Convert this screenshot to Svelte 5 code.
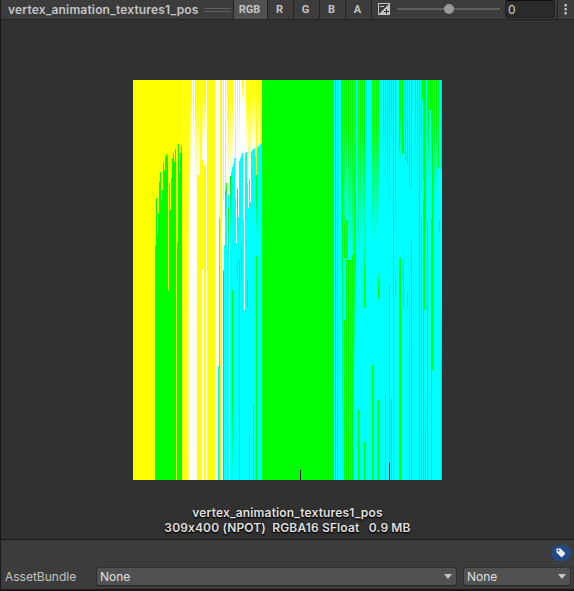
<script>
  const Y = '#ff0', W = '#fff', G = '#0f0', C = '#0ff';
  const gf = 'url(#greenFade)', gr = 'url(#greenRise)', yf = 'url(#yellowFade)', yr = 'url(#yellowRise)';

  // [x, width, top, bottom, fill]
  const base = [
    [0, 50, 0, 400, Y], [50, 79, 0, 400, W], [129, 72, 0, 400, G], [201, 108, 0, 400, C]
  ];

  // first green row of each column, left cluster
  const leftTops = [166, 118, 155, 133, 102, 92, 120, 110, 83, 90, 77, 74, 76, 210, 103, 130, 98, 78, 73, 82, 69, 400, 162, 64, 93, 73, 66];
  const left = leftTops.map((t, i) => [22 + i, 1, t, 400, G]);

  // yellow bars over the white band
  const yellow = [
    [51, 1, 0, 400, Y], [53, 1, 0, 400, Y], [55, 1, 0, 400, yf], [55, 1, 200, 400, yr], [57, 1, 0, 100, yf], [58, 1, 0, 40, yf],
    [60, 1, 0, 90, yf], [62, 2, 0, 110, yf], [64, 1, 0, 55, yf], [64, 2, 95, 400, Y], [65, 1, 0, 90, yf],
    [67, 1, 0, 400, Y], [69, 1, 0, 70, yf], [69, 1, 80, 190, Y], [71, 2, 0, 65, yf], [71, 2, 85, 400, Y],
    [74, 2, 0, 400, Y], [77, 1, 0, 400, Y], [79, 1, 0, 400, Y], [81, 1, 0, 400, Y], [87, 2, 0, 400, Y],
    [90, 1, 0, 120, Y], [92, 1, 0, 110, Y], [94, 2, 0, 100, yf], [97, 1, 0, 96, yf], [99, 1, 0, 85, yf],
    [102, 1, 0, 117, Y], [104, 1, 0, 90, yf], [106, 1, 0, 80, yf], [109, 1, 0, 25, yf], [113, 1, 0, 72, yf],
    [115, 1, 0, 100, yf], [117, 1, 0, 90, yf], [119, 1, 0, 68, yf], [121, 1, 0, 68, yf], [123, 1, 0, 95, Y],
    [125, 1, 0, 66, yf], [127, 1, 0, 64, Y]
  ];

  // first cyan row of each column, middle cluster
  const midTops = [165, 110, 103, 170, 115, 400, 96, 92, 87, 84, 78, 117, 163, 109, 137, 81, 78, 76, 73, 140, 230, 73, 72, 103, 128, 99, 122, 72, 70, 69, 68, 76, 95, 67, 66, 66, 64, 63];
  const mid = [
    [85, 1, 286, 400, C], [86, 1, 138, 400, C],
    ...midTops.map((t, i) => [91 + i, 1, t, 400, C]),
    [90, 1, 190, 400, G], [92, 1, 110, 140, gf], [93, 1, 103, 118, gf], [95, 1, 128, 180, gf], [97, 1, 96, 145, gf],
    [99, 1, 210, 285, G], [99, 1, 285, 400, gf], [104, 1, 109, 150, gf], [104, 1, 175, 198, gr], [106, 1, 180, 400, G],
    [108, 1, 165, 225, gf], [114, 1, 200, 228, G], [116, 1, 355, 400, G], [120, 1, 325, 400, G],
    [123, 1, 95, 160, gf], [123, 1, 176, 400, G]
  ];

  const right = [
    [202, 1, 0, 400, G], [204, 1, 0, 400, G], [208, 2, 0, 200, gf], [209, 1, 0, 400, gf], [211, 1, 0, 150, gf], [211, 1, 120, 178, gr],
    [213, 1, 0, 150, gf], [213, 1, 140, 400, G], [215, 1, 0, 170, gf], [215, 1, 180, 400, G], [217, 1, 0, 170, gf], [217, 1, 180, 400, G],
    [219, 1, 0, 200, gf], [219, 1, 175, 400, G], [221, 1, 0, 150, G], [221, 1, 150, 297, gf], [211, 1, 240, 400, G],
    [225, 1, 0, 190, gf], [227, 1, 0, 170, gf], [229, 1, 0, 140, gf], [231, 1, 0, 200, gf], [231, 1, 160, 228, gr],
    [239, 1, 0, 160, gf], [241, 1, 0, 160, gf], [243, 1, 0, 160, gf], [245, 1, 0, 140, gf], [245, 1, 190, 218, gr],
    [250, 1, 0, 85, gf], [252, 1, 0, 110, gf], [254, 1, 0, 130, gf], [256, 1, 0, 160, gf], [258, 1, 0, 70, gf], [260, 1, 0, 400, G],
    [262, 1, 0, 180, gf], [262, 1, 185, 215, gr], [256, 1, 205, 400, G], [225, 1, 330, 400, G], [231, 1, 362, 400, G],
    [239, 1, 285, 400, G], [245, 1, 320, 400, G], [252, 1, 315, 400, G], [258, 1, 319, 400, G],
    [266, 2, 0, 82, gf], [266, 1, 0, 70, G], [266, 2, 178, 400, G], [269, 2, 0, 74, G], [272, 1, 0, 80, G], [274, 1, 0, 85, G], [276, 1, 0, 105, G],
    [276, 1, 180, 400, gr], [270, 1, 165, 229, gr], [274, 1, 212, 229, G], [278, 1, 0, 108, G], [278, 1, 160, 400, G],
    [282, 1, 0, 90, gf], [284, 1, 0, 120, gf], [286, 1, 0, 400, G], [288, 5, 0, 20, G], [288, 1, 20, 110, gf], [290, 3, 20, 100, G],
    [288, 1, 135, 400, G], [290, 1, 120, 400, G], [291, 1, 95, 230, G], [292, 1, 100, 180, gf], [294, 2, 0, 110, gf], [294, 1, 140, 400, G],
    [297, 2, 0, 30, G], [298, 1, 30, 95, gf], [299, 1, 0, 138, G], [298, 2, 138, 290, G], [298, 1, 290, 400, G], [292, 1, 310, 400, gr],
    [301, 1, 0, 120, gf], [303, 1, 0, 110, gf], [305, 1, 0, 88, G], [306, 1, 140, 152, G], [308, 1, 0, 90, G], [308, 1, 200, 400, gr]
  ];

  const marks = [[167, 1, 390, 400, '#000'], [256, 1, 382, 400, '#000']];
  const bars = [...base, ...left, ...yellow, ...mid, ...right, ...marks];
  const channels = ['RGB', 'R', 'G', 'B', 'A'];
</script>

<main>
  <header>
    <div class="title">vertex_animation_textures1_pos</div>
    <i class="grip"></i>
    {#each channels as c, i}
      <button class:on={i === 0} class="ch">{c}</button>
    {/each}
    <div class="expo">
      <svg width="12" height="12" viewBox="0 0 12 12">
        <rect x=".5" y=".5" width="11" height="11" fill="#3c3c3c" stroke="#c4c4c4" />
        <path d="M12 0V12H0Z" fill="#c4c4c4" />
        <path d="M2 3.5H6" stroke="#c4c4c4" />
        <path d="M6 8.5H11M8.5 6V11" stroke="#303030" />
      </svg>
    </div>
    <div class="slider"><b></b></div>
    <div class="num">0</div>
    <div class="menu"><svg width="4" height="12" viewBox="0 0 4 12" fill="#c4c4c4"><rect x=".5" y="1" width="2.4" height="2.4" rx=".6" /><rect x=".5" y="5" width="2.4" height="2.4" rx=".6" /><rect x=".5" y="9" width="2.4" height="2.4" rx=".6" /></svg></div>
  </header>

  <section class="preview">
    <svg class="texture" width="309" height="400" viewBox="0 0 309 400" shape-rendering="crispEdges">
      <defs>
        <linearGradient id="greenFade" x2="0" y2="1"><stop offset=".3" stop-color="#0f0" /><stop offset="1" stop-color="#0f0" stop-opacity="0" /></linearGradient>
        <linearGradient id="greenRise" x2="0" y2="1"><stop offset="0" stop-color="#0f0" stop-opacity="0" /><stop offset=".5" stop-color="#0f0" /></linearGradient>
        <linearGradient id="yellowFade" x2="0" y2="1"><stop offset=".2" stop-color="#ff0" /><stop offset="1" stop-color="#ff0" stop-opacity="0" /></linearGradient>
        <linearGradient id="yellowRise" x2="0" y2="1"><stop offset="0" stop-color="#ff0" stop-opacity="0" /><stop offset="1" stop-color="#ff0" stop-opacity=".6" /></linearGradient>
      </defs>
      {#each bars as [x, w, y0, y1, fill]}
        <rect {x} y={y0} width={w} height={y1 - y0} {fill} />
      {/each}
    </svg>
    <div class="info">
      <div class="name">vertex_animation_textures1_pos</div>
      <div class="meta">309x400 (NPOT)&nbsp; RGBA16 SFloat&nbsp;&nbsp; 0.9 MB</div>
    </div>
  </section>

  <footer>
    <div class="tags">
      <span class="tag"><svg width="10" height="10" viewBox="0 0 10 10"><path d="M.5 1.2Q.5.5 1.2.5H4.6L9.5 5.4 5.7 9.4.5 4.6Z" fill="#eee" /><circle cx="2.6" cy="2.6" r=".9" fill="#214a87" /></svg></span>
    </div>
    <div class="row">
      <label for="bundle">AssetBundle</label>
      <div class="select wide" id="bundle"><span>None</span><i></i></div>
      <div class="select"><span>None</span><i></i></div>
    </div>
  </footer>
</main>

<style>
  :global(body) { background: #191919; overflow: hidden; }
  main {
    box-sizing: border-box; width: 574px; height: 591px; border-left: 1px solid #191919; border-bottom: 2px solid #191919;
    display: flex; flex-direction: column; background: #313131; color: #c4c4c4; font: 12px Inter, sans-serif;
    font-feature-settings: 'calt' 0; overflow: hidden;
  }
  header { height: 19px; flex: none; display: flex; background: #3c3c3c; border-bottom: 1px solid #232323; }
  .title { width: 196px; padding-left: 7px; font-weight: 600; line-height: 19px; letter-spacing: .17px; white-space: nowrap; }
  .grip { width: 27px; height: 2px; margin: 8px 2px 0 0; border: solid #616161; border-width: 1px 0; }
  .ch {
    box-sizing: border-box; width: 26px; height: 19px; padding: 0 2px 0 0; border: 0; border-left: 1px solid #232323; background: none;
    color: #c4c4c4; font: bold 11px/18px Roboto, sans-serif;
  }
  .ch.on { width: 34px; background: #505050; }
  .expo { width: 26px; flex: none; border-left: 1px solid #232323; padding: 3px 0 0 6px; box-sizing: border-box; }
  .expo svg { display: block; }
  .slider { width: 103px; flex: none; height: 2px; margin: 8px 5px 0 0; background: #5e5e5e; display: flex; justify-content: center; align-items: center; }
  .slider b { width: 10px; height: 10px; flex: none; border-radius: 50%; background: #999; }
  .num {
    box-sizing: border-box; width: 50px; flex: none; height: 18px; border: 1px solid #212121; border-top-color: #0d0d0d; border-radius: 3px;
    background: #2a2a2a; padding-left: 2px; line-height: 17px; color: #d2d2d2;
  }
  .menu { margin-left: 2px; border-left: 1px solid #232323; padding: 3px 0 0 6px; }
  .menu svg { display: block; }
  .preview { flex: 1; display: flex; flex-direction: column; align-items: center; padding-top: 60px; }
  .texture { display: block; }
  .info { margin-top: 25px; font-weight: 600; line-height: 15px; text-align: center; color: #e0e0e0; text-shadow: 0 1px 1px #000, 0 1px 2px #000; white-space: nowrap; }
  .name { letter-spacing: .17px; }
  .meta { letter-spacing: .14px; }
  footer { box-sizing: border-box; height: 50px; flex: none; background: #3c3c3c; border-top: 1px solid #1a1a1a; padding: 5px 3px 0 4px; }
  .tags { display: flex; justify-content: flex-end; height: 22px; }
  .tag { width: 20px; height: 16px; border-radius: 8px; background: #214a87; display: flex; align-items: center; justify-content: center; }
  .row { display: flex; align-items: center; gap: 6px; height: 19px; }
  label { width: 85px; flex: none; line-height: 18px; }
  .select {
    box-sizing: border-box; flex: 1; height: 19px; display: flex; align-items: center; justify-content: space-between;
    padding: 0 4px 0 3px; background: #515151; border: 1px solid #303030; border-bottom-color: #242424; border-radius: 3px; color: #e0e0e0;
  }
  .wide { width: 361px; flex: none; }
  .select i { border: 4px solid transparent; border-top: 5px solid #c4c4c4; border-bottom: 0; }
</style>
